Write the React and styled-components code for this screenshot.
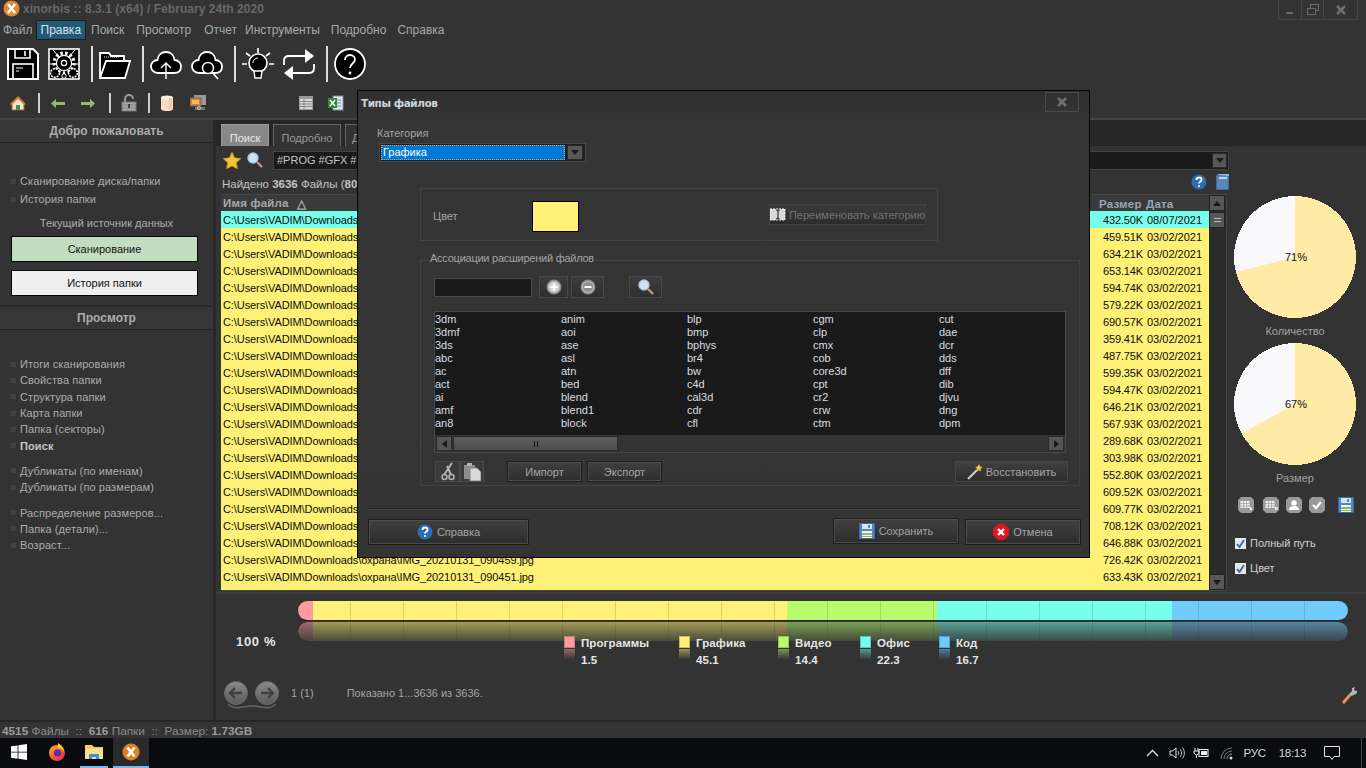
import React from "react";
import styled, { createGlobalStyle } from "styled-components";

const Global = createGlobalStyle`
  html, body { margin: 0; padding: 0; background: #333; overflow: hidden; }
  * { box-sizing: border-box; }
`;
const sans = `"Liberation Sans", Arial, sans-serif`;
const wide = `"DejaVu Sans", Verdana, sans-serif`;

const Page = styled.div`
  position: relative; width: 1366px; height: 768px; background: #333; display: flex; flex-direction: column;
  font: 11px ${sans}; color: #b4b4b4; overflow: hidden;
`;
const TitleBar = styled.div`height: 20px; display: flex; align-items: flex-start; padding-left: 3px; flex: none;`;
const TitleText = styled.div`font: bold 12px/18px ${sans}; letter-spacing: .05px; color: #686868; margin-left: 3px; flex: 1; white-space: nowrap;`;
const WinButtons = styled.div`display: flex; height: 20px; margin-right: 8px; border: 1px solid #474747; border-top: 0; color: #6a6a6a;`;
const WinButton = styled.div`width: ${p => p.$w}px; display: flex; align-items: center; justify-content: center; & + & { border-left: 1px solid #474747; }`;
const MenuBar = styled.div`height: 20px; display: flex; align-items: center; padding-left: 3px; flex: none;`;
const MenuItem = styled.div`
  font: 12px/18px ${sans}; height: 18px; padding: 0 ${p => p.$active ? 4 : 0}px; margin-right: ${p => p.$gap}px; white-space: nowrap;
  color: ${p => p.$active ? "#d8e4e8" : "#a3a9ab"}; background: ${p => p.$active ? "#215a74" : "transparent"};
  outline: ${p => p.$active ? "1px solid #1d1d1d" : "none"};
`;
const BigBar = styled.div`height: 48px; display: flex; align-items: center; padding-left: 7px; flex: none;`;
const BigSlot = styled.div`width: ${p => p.$w || 32}px; height: 34px; margin-right: ${p => p.$mr ?? 9}px; display: flex; align-items: center; justify-content: center; flex: none;`;
const BigSep = styled.div`width: 2px; height: 36px; background: #ddd; margin: 0 6px 0 ${p => p.$ml ?? 2}px; flex: none;`;
const SmallBar = styled.div`height: 30px; display: flex; align-items: center; padding-left: 9px; flex: none;`;
const SmallSlot = styled.div`width: 18px; height: 18px; margin-left: ${p => p.$ml || 0}px; display: flex; align-items: center; justify-content: center; flex: none;`;
const SmallSep = styled.div`width: 2px; height: 20px; background: #cfcfcf; margin-left: ${p => p.$ml || 0}px; flex: none;`;

const Main = styled.div`height: 602px; display: flex; flex: none; border-top: 2px solid #444;`;
const Sidebar = styled.div`width: 213px; flex: none; display: flex; flex-direction: column;`;
const SideHead = styled.div`
  height: ${p => p.$top ? 25 : 23}px; display: flex; align-items: center; justify-content: center; font: bold 12px/22px ${sans}; color: #acacac; word-spacing: 1px;
  border-bottom: 1px solid #242424; background: #363636; border-top: ${p => p.$top ? "2px solid #292929" : "0"}; flex: none; margin-top: ${p => p.$mt || 0}px;
`;
const SideList = styled.div`display: flex; flex-direction: column; margin-top: ${p => p.$mt || 0}px;`;
const SideItem = styled.div`
  display: flex; align-items: center; height: ${p => p.$h || 16.3}px; padding-left: 11px; white-space: nowrap; font-weight: ${p => p.$bold ? 700 : 400}; letter-spacing: .1px;
  color: ${p => p.$bold ? "#c4c4c4" : "#acacac"};
  &::before { content: ""; width: 5px; height: 5px; background: #424242; margin-right: 4px; flex: none; }
`;
const SideCaption = styled.div`text-align: center; margin-top: 8px; height: 14px; line-height: 14px; color: #acacac;`;
const SideButton = styled.div`
  margin: ${p => p.$mt}px 0 0 11px; width: 187px; height: 26px; display: flex; align-items: center; justify-content: center;
  border: 1px solid #050505; background: ${p => p.$bg}; color: #111; font-size: 11px;
`;
const Pane = styled.div`flex: 1; display: flex; flex-direction: column; border-left: 3px solid #282828; min-width: 0;`;
const TabBar = styled.div`height: 26px; background: #262626; display: flex; align-items: flex-end; padding-left: 5px; gap: 4px; flex: none;`;
const Tab = styled.div`
  height: 22px; width: ${p => p.$w}px; display: flex; align-items: center; justify-content: ${p => p.$left ? "flex-start" : "center"}; padding: 4px 0 0 ${p => p.$left ? 6 : 0}px;
  background: ${p => p.$active ? "#888" : "#333"}; color: ${p => p.$active ? "#e8e8e8" : "#999"}; border: 1px solid ${p => p.$active ? "#999" : "#666"}; border-bottom: 0;
`;
const Upper = styled.div`height: 446px; display: flex; flex: none;`;
const ListCol = styled.div`width: 1014px; flex: none; display: flex; flex-direction: column; padding: 0 1px 0 4px;`;
const SearchRow = styled.div`height: 20px; margin-top: 4px; display: flex; align-items: center; flex: none; padding-left: 3px;`;
const SearchGlass = styled.div`margin-left: 6px; display: flex;`;
const SearchField = styled.div`
  margin-left: 10px; flex: 1; height: 19px; background: #1a1a1a; border: 1px solid #444; display: flex; align-items: center; justify-content: space-between;
  font: 11px ${sans}; color: #c4c4c4; padding-left: 3px;
`;
const ComboArrow = styled.div`
  width: ${p => p.$w || 15}px; height: ${p => p.$h || 15}px; background: #585858; border: 1px solid #2a2a2a; margin-right: 1px; display: flex; align-items: center; justify-content: center;
  &::after { content: ""; border: 4px solid transparent; border-top: 5px solid #1c1c1c; border-bottom: 0; }
`;
const FoundRow = styled.div`height: 16px; margin-top: 6px; display: flex; align-items: center; flex: none; color: #c4c4c4; gap: 3px; font-size: 11.5px; padding-left: 2px;`;
const FoundIcons = styled.div`margin: -4px 0 0 auto; display: flex; align-items: center; gap: 9px;`;
const Table = styled.div`height: 397px; margin-top: 2px; display: flex; border: 1px solid #454545; border-left: 0; flex: none; width: 1006px; margin-left: 1px;`;
const TableMain = styled.div`flex: 1; display: flex; flex-direction: column; min-width: 0;`;
const HeadRow = styled.div`height: 16px; display: flex; flex: none; background: #3a3a3a; font-weight: 700; color: #a8a8a8; align-items: center; font-size: 11.5px; letter-spacing: .2px; padding-top: 1px;`;
const HeadName = styled.div`flex: 1; padding-left: 2px; display: flex; gap: 8px;`;
const HeadSize = styled.div`width: 47px; color: #97a6b6;`;
const HeadDate = styled.div`width: 63px; color: #97a6b6;`;
const Rows = styled.div`flex: 1; overflow: hidden; background: #fff176;`;
const Row = styled.div`height: 17px; display: flex; align-items: center; color: #0d0d0d; background: ${p => p.$cyan ? "#76ffec" : "#fff176"}; white-space: nowrap;`;
const CellName = styled.div`flex: 1; padding-left: 2px; letter-spacing: -.09px;`;
const CellSize = styled.div`width: 60px; text-align: right; margin-right: 4px; letter-spacing: -.15px;`;
const CellDate = styled.div`width: 62px;`;
const VScroll = styled.div`width: 17px; flex: none; background: #2b2b2b; display: flex; flex-direction: column; padding: 0 1px 0 0;`;
const ScrollBtn = styled.div`
  height: 16px; background: #575757; border: 1px solid #222; display: flex; align-items: center; justify-content: center; flex: none; margin-top: ${p => p.$auto ? "auto" : (p.$mt || 0) + "px"};
`;
const Arrow = styled.div`
  width: 0; height: 0; border: 4px solid transparent;
  ${p => p.$dir === "up" && "border-bottom: 5px solid #181818; border-top: 0;"}
  ${p => p.$dir === "down" && "border-top: 5px solid #181818; border-bottom: 0;"}
  ${p => p.$dir === "left" && "border-right: 5px solid #181818; border-left: 0;"}
  ${p => p.$dir === "right" && "border-left: 5px solid #181818; border-right: 0;"}
`;
const Grip = styled.div`width: 7px; height: 4px; border-top: 1px solid #bbb; border-bottom: 1px solid #bbb;`;
const SideCol = styled.div`flex: 1; display: flex; flex-direction: column; align-items: center; padding: 50px 6px 0 0;`;
const PieCaption = styled.div`margin-top: 6px; height: 14px; line-height: 14px; color: #a2a2a2; margin-bottom: 5px;`;
const ActionIcons = styled.div`display: flex; align-self: flex-start; margin: 7px 0 0 8px; gap: 7px;`;
const ActionSlot = styled.div`margin-left: ${p => p.$ml || 0}px; display: flex;`;
const Check = styled.div`display: flex; align-items: center; align-self: flex-start; margin: ${p => p.$mt}px 0 0 5px; height: 12px; color: #d0d0d0; gap: 4px;`;
const CheckBox = styled.div`width: 11px; height: 11px; background: #e8e8e8; display: flex; align-items: center; justify-content: center;`;

const Lower = styled.div`flex: 1; display: flex; flex-direction: column; padding-top: 7px; border-top: 2px solid #3d3d3d; width: 100%;`;
const BarBlock = styled.div`margin-left: 82px; width: 1050px; height: 39px; display: flex; flex-direction: column; flex: none;`;
const BarStrip = styled.div`
  height: 19px; display: flex; border-radius: 10px; overflow: hidden; flex: none;
  ${p => p.$mirror && "margin-top: 1px; mask-image: linear-gradient(rgba(0,0,0,.55), rgba(0,0,0,.12));"}
`;
const Seg = styled.div`
  width: ${p => p.$w}px; flex: none; background-color: ${p => p.$c};
  background-image: ${p => p.$ticks ? "linear-gradient(to right, rgba(0,0,0,.13) 1px, transparent 1px)" : "none"};
  background-size: 53px 100%; background-position: ${p => p.$off || 0}px 0;
`;
const BarLine = styled.div`height: 1px; background: #2a2a2a; flex: none;`;
const Stats = styled.div`display: flex; margin-top: -5px; height: 34px; flex: none; padding-left: 20px; position: relative;`;
const Percent = styled.div`font: bold 13px/16px ${sans}; color: #e4e4e4; width: 328px; margin-top: -1px; letter-spacing: .7px;`;
const LegendItem = styled.div`width: ${p => p.$w}px; display: flex; flex: none; gap: 6px;`;
const SwatchWrap = styled.div`width: 11px; display: flex; flex-direction: column; margin-top: 1px;`;
const Swatch = styled.div`height: 12px; background: ${p => p.$c}; border: 1px solid rgba(0,0,0,.22);`;
const SwatchMirror = styled.div`height: 10px; margin-top: 1px; background: ${p => p.$c}; mask-image: linear-gradient(rgba(0,0,0,.5), rgba(0,0,0,.05));`;
const LegendText = styled.div`font: bold 11.5px/17px ${sans}; color: #e6e6e6; white-space: nowrap; letter-spacing: .1px;`;
const NavRow = styled.div`display: flex; align-items: center; height: 30px; margin-top: 11px; padding: 0 9px 0 8px; flex: none; color: #a4a4a4;`;
const NavText = styled.div`margin: 0 0 4px ${p => p.$ml}px; white-space: nowrap;`;
const NavTool = styled.div`margin-left: auto; display: flex;`;

const StatusBar = styled.div`height: 18px; flex: none; border-top: 2px solid #262626; padding: 1px 0 0 2px; font: 11.8px/17px ${sans}; color: #8a8a8a; white-space: pre;`;
const StatusNum = styled.b`color: #9a9a9a;`;
const Taskbar = styled.div`height: 30px; flex: none; background: #090b0e; display: flex; align-items: stretch; color: #dcdcdc;`;
const TaskSlot = styled.div`
  width: ${p => p.$w}px; margin-left: ${p => p.$ml || 0}px; display: flex; align-items: center; justify-content: center; flex: none;
  background: ${p => p.$active ? "#2a2a2a" : "transparent"}; border-bottom: 2px solid ${p => p.$line ? "#76b9ed" : "transparent"};
`;
const Tray = styled.div`margin-left: auto; display: flex; align-items: center; font: 12px ${sans}; color: #d8d8d8;`;
const TraySlot = styled.div`margin-left: ${p => p.$ml || 0}px; display: flex; align-items: center;`;
const TrayText = styled(TraySlot)`font-size: 11.5px; letter-spacing: -.3px;`;
const TrayEdge = styled.div`width: 1px; height: 100%; background: #444; margin: 0 4px 0 21px;`;

const Dialog = styled.div`
  position: absolute; left: 357px; top: 90px; width: 733px; height: 468px; border: 1px solid #050505; padding: 1px;
  background: linear-gradient(#2f2f2f, #353535 30px, #343434); display: flex; flex-direction: column; color: #a4a4a4;
`;
const DlgTitle = styled.div`height: 21px; display: flex; justify-content: space-between; padding: 0 9px 0 2px; flex: none;`;
const DlgTitleText = styled.div`font: bold 10.5px/23px ${wide}; color: #cdd4da; letter-spacing: -.45px;`;
const DlgClose = styled.div`width: 34px; height: 20px; border: 1px solid #4a4a4a; display: flex; align-items: center; justify-content: center;`;
const DlgLabel = styled.div`margin: 13px 0 0 18px; height: 14px; line-height: 14px; color: #a4a4a4; flex: none;`;
const Select = styled.div`margin: 3px 0 0 20px; width: 207px; height: 19px; background: #1e1e1e; border: 1px solid #484848; padding: 1px; display: flex; align-items: center; gap: 2px; flex: none;`;
const SelectValue = styled.div`flex: 1; height: 15px; background: #0078d7; outline: 1px dotted #d8a060; outline-offset: -1px; color: #fff; line-height: 15px; padding-left: 2px;`;
const Group = styled.div`
  position: relative; margin: ${p => p.$mt}px 0 0 61px; width: ${p => p.$w}px; height: ${p => p.$h}px; border: 1px solid #434343; flex: none;
`;
const ColorRow = styled.div`display: flex; padding: 12px 0 0 12px;`;
const ColorLabel = styled.div`width: 99px; height: 31px; line-height: 31px;`;
const ColorSwatch = styled.div`width: 47px; height: 31px; background: #fff176; border: 1px solid #000;`;
const Rename = styled.div`
  margin: 3px 0 0 190px; width: 157px; height: 21px; display: flex; align-items: center; color: #737373; background: linear-gradient(#3b3b3b, #2c2c2c); border: 1px solid #414141; white-space: nowrap; gap: 3px;
`;
const Legend = styled.div`position: absolute; top: -10px; left: 9px; background: #343434; color: #a4a4a4; line-height: 14px; padding-right: 1px; letter-spacing: -.25px;`;
const GroupInner = styled.div`display: flex; flex-direction: column; padding: 15px 0 0 13px;`;
const ToolRow = styled.div`display: flex; align-items: center; height: 22px; flex: none;`;
const TextBox = styled.div`width: 98px; height: 19px; background: #1a1a1a; border: 1px solid #4a4a4a;`;
const IconBtn = styled.div`
  width: ${p => p.$w}px; height: ${p => p.$h || 22}px; margin-left: ${p => p.$ml || 0}px; display: flex; align-items: center; justify-content: center;
  background: ${p => p.$plain ? "#3a3a3a" : "linear-gradient(#3c3c3c, #2f2f2f)"}; border: 1px solid #484848;
`;
const ExtList = styled.div`margin-top: 13px; width: 632px; height: 142px; display: flex; flex-direction: column; border: 1px solid #484848; background: #1a1a1a;`;
const ExtGrid = styled.div`
  flex: 1; display: grid; grid-auto-flow: column; grid-template-rows: repeat(9, 13px); grid-template-columns: repeat(5, 126px); padding-top: 1px; overflow: hidden; color: #d8dde0; line-height: 13px;
`;
const HScroll = styled.div`height: 17px; background: #343434; display: flex; flex: none; align-items: stretch; padding: 1px;`;
const HBtn = styled.div`width: 16px; background: #555; border: 1px solid #2a2a2a; display: flex; align-items: center; justify-content: center; margin-left: ${p => p.$auto ? "auto" : "0"};`;
const HThumb = styled.div`width: 165px; margin-left: 1px; background: linear-gradient(#5e5e5e, #4c4c4c); border: 1px solid #2a2a2a; display: flex; align-items: center; justify-content: center; gap: 2px;`;
const Tick = styled.div`width: 1px; height: 6px; background: #111;`;
const ActionRow = styled.div`display: flex; margin-top: 8px; height: 21px; width: 634px; flex: none;`;
const FlatButton = styled.div`
  width: ${p => p.$w}px; height: ${p => p.$h || 21}px; margin-left: ${p => p.$auto ? "auto" : (p.$ml || 0) + "px"}; margin-bottom: ${p => p.$mb || 0}px; display: flex; align-items: center; justify-content: center; gap: ${p => p.$gap || 0}px;
  background: linear-gradient(#404040, #2d2d2d); border: 1px solid ${p => p.$soft ? "#464646" : "#1d1d1d"}; outline: ${p => p.$soft ? "none" : "1px solid #4c4c4c"}; outline-offset: -2px; color: #a4a4a4; flex: none;
`;
const Divider = styled.div`margin: 22px 0 0 10px; width: 711px; background: #222; border-bottom: 1px solid #444; height: 2px; flex: none;`;
const DlgFooter = styled.div`display: flex; margin: 8px 0 0 9px; width: 713px; flex: none; align-items: center;`;

const Ic = ({ w = 32, h = 32, vb, children }) => <svg width={w} height={h} viewBox={vb || `0 0 ${w} ${h}`} fill="none">{children}</svg>;

const Logo = () => (
  <Ic w={17} h={17}><circle cx="8.5" cy="8.5" r="8" fill="#df8a30" /><path d="M5 4l7 9M12 4l-7 9" stroke="#fff" strokeWidth="2.6" /></Ic>
);
const SaveBig = () => (
  <Ic><path d="M1 1h25l5 5v25H1z" fill="#000" stroke="#fff" strokeWidth="2" /><path d="M8 1v9h15V1M18 3v5" stroke="#fff" strokeWidth="1.6" /><rect x="6" y="16" width="20" height="15" stroke="#fff" strokeWidth="1.6" /><path d="M9 20h7M9 23h3" stroke="#fff" /></Ic>
);
const GearBig = () => (
  <Ic>
    <rect x="1" y="1" width="30" height="30" fill="#000" stroke="#fff" strokeWidth="1.6" />
    <circle cx="16" cy="15" r="10" stroke="#fff" strokeWidth="3.2" strokeDasharray="2.4 2.4" />
    <circle cx="16" cy="15" r="7.6" stroke="#fff" strokeWidth="1.2" />
    <circle cx="16" cy="15" r="2.6" stroke="#fff" strokeWidth="1.2" />
    <path d="M5 2l7 8M27 2l-7 8M1 16h7M31 16h-7" stroke="#fff" />
    <circle cx="7" cy="25" r="4.4" fill="#000" stroke="#fff" strokeWidth="1.6" strokeDasharray="2 1" />
    <circle cx="25" cy="25" r="4.4" fill="#000" stroke="#fff" strokeWidth="1.6" strokeDasharray="2 1" />
    <circle cx="16" cy="28" r="2.2" fill="#000" stroke="#fff" />
  </Ic>
);
const FolderBig = () => (
  <Ic>
    <path d="M1 29V5h9l2 3h13v5" stroke="#fff" strokeWidth="1.8" fill="#000" />
    <path d="M5 9h16" stroke="#fff" strokeDasharray="1 1" />
    <path d="M1 30l6-17h24l-5 17z" fill="#000" stroke="#fff" strokeWidth="1.8" />
  </Ic>
);
const cloud = "M8 25C3 25 1 21 1 18.5 1 15 4 12 7.500 12 8 7 11.500 4 16 4s8 3 8.500 8c3.500 0 6.500 3 6.500 6.500S29 25 24 25";
const CloudUp = () => (
  <Ic><path d={cloud + "z"} fill="#000" stroke="#fff" strokeWidth="1.8" /><path d="M16 31V15M11 20l5-5 5 5" stroke="#fff" strokeWidth="1.4" /></Ic>
);
const CloudFind = () => (
  <Ic><path d={cloud + "z"} fill="#000" stroke="#fff" strokeWidth="1.8" /><circle cx="17" cy="20" r="5.500" fill="#000" stroke="#fff" strokeWidth="1.4" /><path d="M21 24l6 7" stroke="#fff" strokeWidth="1.6" /></Ic>
);
const BulbBig = () => (
  <Ic w={32} h={34}>
    <path d="M16 1v5M4 6l4 3M28 6l-4 3M0 17h5M27 17h5" stroke="#fff" strokeWidth="1.6" />
    <circle cx="16" cy="16" r="9" fill="#000" stroke="#fff" strokeWidth="1.6" />
    <path d="M12 24h8l-1 7h-6z" fill="#000" stroke="#fff" strokeWidth="1.4" />
    <path d="M11 16a5 5 0 0 1 5-5" stroke="#fff" />
  </Ic>
);
const SwapBig = () => (
  <Ic>
    <path d="M1 17v-4c0-3 2-5 5-5h17" stroke="#fff" strokeWidth="1.8" />
    <path d="M22 1l9 7-9 7z" fill="#fff" />
    <path d="M31 16v4c0 3-2 5-5 5H9" stroke="#fff" strokeWidth="1.8" />
    <path d="M10 18l-9 7 9 7z" fill="#fff" />
  </Ic>
);
const HelpBig = () => (
  <Ic>
    <circle cx="16" cy="16" r="15" fill="#000" stroke="#fff" strokeWidth="1.8" />
    <path d="M11 12c0-3 2.200-5 5-5s5 2 5 4.500c0 4-5 4-5 8.500" stroke="#fff" strokeWidth="1.8" />
    <circle cx="16" cy="25" r="1.400" fill="#fff" />
  </Ic>
);
const Home = () => (
  <Ic w={18} h={18}><path d="M3 9v7h12V9L9 4z" fill="#f2e6cf" stroke="#8a6a3e" /><path d="M1 10l8-8 8 8-1.500 1L9 5l-6.500 6z" fill="#d9772a" /><rect x="7" y="11" width="4" height="5" fill="#4d8a4a" /></Ic>
);
const GreenArrow = ({ left }) => (
  <Ic w={14} h={9}><path d={left ? "M0 4.500L5 0v3h9v3H5v3z" : "M14 4.500L9 0v3H0v3h9v3z"} fill="#8cc06e" /></Ic>
);
const Lock = () => (
  <Ic w={16} h={18}><path d="M4 8V5a4 4 0 0 1 8 0" stroke="#999" strokeWidth="2" /><rect x="1" y="8" width="14" height="9" fill="#aaa" stroke="#777" /><path d="M1 11h14M1 14h14" stroke="#808080" /><rect x="7" y="10" width="2" height="4" fill="#444" /></Ic>
);
const Db = () => (
  <Ic w={14} h={16}><rect x="1" y="2" width="12" height="12" fill="#ffdcbe" /><ellipse cx="7" cy="2.500" rx="6" ry="2" fill="#fff4e8" /><ellipse cx="7" cy="14" rx="6" ry="2" fill="#ffdcbe" /><rect x="9" y="3" width="3" height="11" fill="#f4c7a0" /></Ic>
);
const Net = () => (
  <Ic w={16} h={16}><rect x="4" y="0" width="12" height="10" fill="#9a9a9a" /><rect x="0" y="3" width="11" height="8" fill="#d88428" stroke="#666" /><rect x="2" y="5" width="7" height="4" fill="#eebb66" /><path d="M5 12h10v3H5z" fill="#777" /><circle cx="9" cy="13" r="1.500" stroke="#ccc" /></Ic>
);
const TableIc = () => (
  <Ic w={14} h={14}><rect x=".5" y=".5" width="13" height="13" fill="#d8d8d8" stroke="#999" /><rect x="1" y="1" width="12" height="2" fill="#999" /><path d="M1 5.500h12M1 8h12M1 10.500h12M5 3v10" stroke="#888" /></Ic>
);
const Excel = () => (
  <Ic w={16} h={16}><rect x="5" y="1" width="10" height="14" fill="#dfe8f0" stroke="#6c8fb0" /><path d="M7 5h6M7 8h6M7 11h6" stroke="#6c8fb0" /><rect x="0" y="3" width="9" height="10" fill="#2f8a3d" /><path d="M2 5l5 6M7 5l-5 6" stroke="#fff" strokeWidth="1.400" /></Ic>
);
const Star = () => (
  <Ic w={18} h={17}><path d="M9 0l2.700 5.800 6.300.7-4.700 4.300 1.300 6.200L9 14l-5.600 3 1.300-6.200L0 6.500l6.300-.7z" fill="#f4c430" stroke="#c08a20" strokeWidth=".6" /></Ic>
);
const Glass = () => (
  <Ic w={16} h={16}><circle cx="6" cy="6" r="5" fill="#cfe3f7" stroke="#a8c4e0" strokeWidth="1.400" /><path d="M10 10l5 5" stroke="#c79a6a" strokeWidth="2.400" /></Ic>
);
const HelpBlue = ({ s = 16 }) => (
  <svg width={s} height={s} viewBox="0 0 16 16" fill="none">
    <circle cx="8" cy="8" r="7.500" fill="#2d6cb0" />
    <path d="M5.500 6c0-1.500 1.200-2.500 2.600-2.500S10.600 4.400 10.600 5.800c0 2-2.600 2-2.600 3.800" stroke="#fff" strokeWidth="1.800" />
    <circle cx="8" cy="12" r="1.100" fill="#fff" />
  </svg>
);
const Book = () => (
  <Ic w={13} h={16}><rect x="0" y="1" width="13" height="15" fill="#5b87b8" stroke="#2d4f7c" /><rect x="3" y="3" width="8" height="2" fill="#bcd4ee" /><path d="M1 1l2-1h10v2" fill="#9ab8d8" /></Ic>
);
const FloppyBlue = ({ s = 16 }) => (
  <svg width={s} height={s} viewBox="0 0 16 16" fill="none">
    <rect x=".5" y=".5" width="15" height="15" fill="#4f87c8" stroke="#3a6aa4" />
    <rect x="3" y="1" width="10" height="5" fill="#d8e4f2" /><rect x="9" y="2" width="2" height="3" fill="#4f87c8" />
    <rect x="3" y="8" width="10" height="7" fill="#f4f4f4" /><rect x="3" y="10" width="10" height="2" fill="#88c057" /><rect x="3" y="13" width="10" height="1" fill="#88c057" />
  </svg>
);
const GrayTile = ({ children }) => (
  <Ic w={16} h={16}><path d="M3 0h10l3 3v10l-3 3H3l-3-3V3z" fill="#9a9a9a" />{children}</Ic>
);
const GridTile = ({ d }) => (
  <GrayTile><rect x="2.500" y="4" width="9" height="7" fill="#eee" /><path d="M2.500 6.500h9M2.500 9h9M5.500 4v7M8.500 4v7" stroke="#999" strokeWidth=".7" /><path d={d} stroke="#fff" /></GrayTile>
);
const PersonTile = () => <GrayTile><circle cx="8" cy="6" r="2.700" fill="#fff" /><path d="M3 13c0-3 2-4 5-4s5 1 5 4z" fill="#fff" /></GrayTile>;
const CheckTile = () => <GrayTile><path d="M4 8l3 3 5-6" stroke="#fff" strokeWidth="2.200" /></GrayTile>;
const CheckMark = () => <Ic w={9} h={9}><path d="M1 5l2.500 3L8 1" stroke="#3b5fa8" strokeWidth="1.800" /></Ic>;
const CloseX = ({ s = 12, c = "#6e6e6e" }) => <svg width={s} height={s} viewBox="0 0 12 12"><path d="M2 2l8 8M10 2l-8 8" stroke={c} strokeWidth="2.600" /></svg>;
const Restore = () => <Ic w={12} h={12}><rect x="3.500" y=".5" width="8" height="6" stroke="#6a6a6a" /><rect x=".5" y="4.500" width="8" height="6" fill="#333" stroke="#6a6a6a" /></Ic>;
const Minimize = () => <Ic w={10} h={10}><path d="M1 8h7" stroke="#6a6a6a" strokeWidth="2" /></Ic>;
const RoundSign = ({ plus }) => (
  <Ic w={16} h={16}><circle cx="8" cy="8" r="6.800" fill="#bdbdbd" stroke="#8a8a8a" strokeWidth="1.400" /><circle cx="8" cy="8" r="5" fill={plus ? "#d4d4d4" : "#8e8e8e"} /><path d={plus ? "M4.500 8h7M8 4.500v7" : "M4.500 8h7"} stroke="#fff" strokeWidth="2" /></Ic>
);
const Scissors = () => (
  <Ic w={14} h={19}><path d="M3 13L11 1M10 13L6 4" stroke="#b0b0b0" strokeWidth="2" /><circle cx="3.500" cy="15" r="2.500" stroke="#b0b0b0" strokeWidth="1.600" /><circle cx="10.500" cy="15" r="2.500" stroke="#b0b0b0" strokeWidth="1.600" /></Ic>
);
const Paste = () => (
  <Ic w={17} h={18}><rect x="0" y="2" width="11" height="14" fill="#8e8e8e" /><rect x="3" y="0" width="5" height="3" fill="#b4b4b4" /><path d="M6 5h7l4 4v9H6z" fill="#d8d8d8" stroke="#8a8a8a" /></Ic>
);
const RenameIc = () => (
  <Ic w={16} h={13}><rect x="0" y="1" width="15" height="11" fill="#d8d8d8" stroke="#fff" strokeDasharray="2 1" /><path d="M6 2h4M6 11h4M8 2v9" stroke="#111" /></Ic>
);
const Wand = () => (
  <Ic w={16} h={16}><path d="M1 15L10 6" stroke="#cfcfcf" strokeWidth="2" /><path d="M12 0l1 2.500 2.500.5-2 2 .5 2.500L12 6.300 9.700 7.500l.5-2.500-2-2 2.500-.5z" fill="#f0c040" /></Ic>
);
const Cancel = () => (
  <Ic w={16} h={16}><path d="M5 0h6l5 5v6l-5 5H5l-5-5V5z" fill="#e3161e" /><path d="M5 5l6 6M11 5l-6 6" stroke="#fff" strokeWidth="2.400" /></Ic>
);
const NavArrows = () => (
  <Ic w={56} h={30}>
    <defs><linearGradient id="nb" x1="0" y1="0" x2="0" y2="1"><stop offset="0" stopColor="#8a8a8a" /><stop offset="1" stopColor="#5a5a5a" /></linearGradient></defs>
    <path d="M4 24c6 7 14 2 24 2s16 5 24-2" stroke="#666" strokeWidth="1.500" />
    <circle cx="12" cy="13" r="11.500" fill="url(#nb)" stroke="#6a6a6a" />
    <circle cx="43" cy="13" r="11.500" fill="url(#nb)" stroke="#6a6a6a" />
    <path d="M18 13H7M11 8l-5 5 5 5" stroke="#3f3f3f" strokeWidth="2.400" />
    <path d="M37 13h11M44 8l5 5-5 5" stroke="#3f3f3f" strokeWidth="2.400" />
  </Ic>
);
const Wrench = () => (
  <Ic w={16} h={17}><path d="M1 15l7-8 2 2-7 8z" fill="#f2945a" /><path d="M8 7l3-3 0-3 3-1-1 3 2 1 2-1-1 3-3 2-3 1z" fill="#b4b4b4" /></Ic>
);
const WinLogo = () => (
  <Ic w={16} h={16}><path d="M0 2.300l6.600-.9v6.300H0zM7.400 1.300L16 0v7.700H7.400zM0 8.400h6.600v6.300L0 13.800zM7.400 8.400H16V16l-8.600-1.200z" fill="#fff" /></Ic>
);
const Firefox = () => (
  <Ic w={18} h={18}>
    <defs><linearGradient id="ff" x1="0" y1="0" x2="1" y2="1"><stop offset="0" stopColor="#ffbb33" /><stop offset=".5" stopColor="#ff5a2c" /><stop offset="1" stopColor="#d81e6a" /></linearGradient></defs>
    <circle cx="9" cy="10" r="8" fill="url(#ff)" /><circle cx="9.500" cy="10" r="3.600" fill="#5a2ea6" />
    <path d="M10 0c3 2 6 4 6 9-2-3-4-4-6-4z" fill="#ffc72c" />
  </Ic>
);
const Explorer = () => (
  <Ic w={18} h={16}><path d="M0 1h7l2 2h9v12H0z" fill="#f6cf5f" /><rect x="0" y="5" width="18" height="10" fill="#fbe08a" /><path d="M4 15v-5h10v5h-3v-2H7v2z" fill="#3a96dd" /></Ic>
);
const XinTask = () => (
  <Ic w={18} h={18}><circle cx="9" cy="9" r="8.500" fill="#d9822b" /><path d="M5.500 4.500l7 9M12.500 4.500l-7 9" stroke="#fff" strokeWidth="2.800" /></Ic>
);
const Chevron = () => <Ic w={13} h={8}><path d="M1 7l5.500-5.500L12 7" stroke="#e4e4e4" strokeWidth="1.300" /></Ic>;
const Speaker = () => (
  <Ic w={16} h={14}><path d="M1 5h2.500L7 2v10L3.500 9H1z" stroke="#e4e4e4" /><path d="M9 5c1 1 1 3 0 4M11 3c2 2 2 6 0 8M13.500 1.500c2.500 3 2.500 8 0 11" stroke="#bdbdbd" /></Ic>
);
const Battery = () => (
  <Ic w={16} h={12}><path d="M2 1v3M5 1v3M1 4h5v2l-2 2H3L1 6zM3.500 8v3" stroke="#eee" /><rect x="6" y="2.500" width="9" height="7" stroke="#eee" /><rect x="8" y="4" width="6" height="4" fill="#eee" /></Ic>
);
const Wifi = () => (
  <Ic w={13} h={13}><path d="M1 12A11 11 0 0 1 12 1M4 12A8 8 0 0 1 12 4" stroke="#777" /><path d="M7 12a5 5 0 0 1 5-5" stroke="#999" /><circle cx="11" cy="11" r="1.500" fill="#ddd" /></Ic>
);
const Comment = () => (
  <Ic w={16} h={16}><path d="M.5 1.500h15v10H10l-2 3-2-3H.5z" stroke="#e4e4e4" /></Ic>
);

const Pie = ({ value }) => {
  const a = (value / 100) * 2 * Math.PI;
  const x = 61 + 61 * Math.sin(a), y = 61 - 61 * Math.cos(a);
  return (
    <svg width="122" height="122" viewBox="0 0 122 122" shapeRendering="crispEdges" style={{ flex: "none" }}>
      <circle cx="61" cy="61" r="61" fill="#f9f9fb" />
      <path d={`M61 61V0A61 61 0 ${value > 50 ? 1 : 0} 1 ${x} ${y}Z`} fill="#ffeba6" />
      <text x="62" y="65" textAnchor="middle" fontFamily={sans} fontSize="11" fill="#111" shapeRendering="auto">{value}%</text>
    </svg>
  );
};

const sizes = ["432.50K","459.51K","634.21K","653.14K","594.74K","579.22K","690.57K","359.41K","487.75K","599.35K","594.47K","646.21K","567.93K","289.68K","303.98K","552.80K","609.52K","609.77K","708.12K","646.88K","726.42K","633.43K"];
const names = (i) => {
  const tail = ["090459", "090451"];
  if (i >= 20) return `C:\\Users\\VADIM\\Downloads\\охрана\\IMG_20210131_${tail[i - 20]}.jpg`;
  return `C:\\Users\\VADIM\\Downloads`;
};
const exts = "3dm 3dmf 3ds abc ac act ai amf an8 anim aoi ase asl atn bed blend blend1 block blp bmp bphys br4 bw c4d cal3d cdr cfl cgm clp cmx cob core3d cpt cr2 crw ctm cut dae dcr dds dff dib djvu dng dpm".split(" ");
const menu = [["Файл", 4], ["Правка", 6, true], ["Поиск", 12], ["Просмотр", 13], ["Отчет", 8], ["Инструменты", 11], ["Подробно", 11], ["Справка", 0]];
const segs = [
  { c: "#ff9a9e", w: 15 }, { c: "#fff176", w: 474, t: 1, o: 37 }, { c: "#b8fb6f", w: 150, t: 1, o: 40 },
  { c: "#76ffec", w: 235, t: 1, o: 49 }, { c: "#70ccff", w: 176, t: 1, o: 26 },
];
const legend = [["Программы", "1.5", "#ff9a9e", 115], ["Графика", "45.1", "#fff176", 99], ["Видео", "14.4", "#b8fb6f", 82], ["Офис", "22.3", "#76ffec", 79], ["Код", "16.7", "#70ccff", 70]];

const Strip = ({ mirror }) => (
  <BarStrip $mirror={mirror}>{segs.map((s, i) => <Seg key={i} $c={s.c} $w={s.w} $ticks={s.t} $off={s.o} />)}</BarStrip>
);

export default function App() {
  return (
    <Page>
      <Global />
      <TitleBar>
        <Logo />
        <TitleText>xinorbis :: 8.3.1 (x64) / February 24th 2020</TitleText>
        <WinButtons>
          <WinButton $w={22}><Minimize /></WinButton>
          <WinButton $w={22}><Restore /></WinButton>
          <WinButton $w={34}><CloseX /></WinButton>
        </WinButtons>
      </TitleBar>
      <MenuBar>
        {menu.map(([t, g, a]) => <MenuItem key={t} $gap={g} $active={a}>{t}</MenuItem>)}
      </MenuBar>
      <BigBar>
        <BigSlot><SaveBig /></BigSlot>
        <BigSlot><GearBig /></BigSlot>
        <BigSep />
        <BigSlot><FolderBig /></BigSlot>
        <BigSep />
        <BigSlot><CloudUp /></BigSlot>
        <BigSlot><CloudFind /></BigSlot>
        <BigSep />
        <BigSlot><BulbBig /></BigSlot>
        <BigSlot><SwapBig /></BigSlot>
        <BigSep />
        <BigSlot $mr={0}><HelpBig /></BigSlot>
      </BigBar>
      <SmallBar>
        <SmallSlot><Home /></SmallSlot>
        <SmallSep $ml={11} />
        <SmallSlot $ml={9}><GreenArrow left /></SmallSlot>
        <SmallSlot $ml={12}><GreenArrow /></SmallSlot>
        <SmallSep $ml={12} />
        <SmallSlot $ml={9}><Lock /></SmallSlot>
        <SmallSep $ml={10} />
        <SmallSlot $ml={8}><Db /></SmallSlot>
        <SmallSlot $ml={13}><Net /></SmallSlot>
        <SmallSlot $ml={90}><TableIc /></SmallSlot>
        <SmallSlot $ml={12}><Excel /></SmallSlot>
      </SmallBar>
      <Main>
        <Sidebar>
          <SideHead>Добро пожаловать</SideHead>
          <SideList $mt={29}>
            <SideItem $h={18}>Сканирование диска/папки</SideItem>
            <SideItem $h={18}>История папки</SideItem>
          </SideList>
          <SideCaption>Текущий источник данных</SideCaption>
          <SideButton $mt={6} $bg="#c1dcc0">Сканирование</SideButton>
          <SideButton $mt={8} $bg="#efefef">История папки</SideButton>
          <SideHead $top $mt={9}>Просмотр</SideHead>
          <SideList $mt={26}>
            {["Итоги сканирования", "Свойства папки", "Структура папки", "Карта папки", "Папка (секторы)"].map(t => <SideItem key={t}>{t}</SideItem>)}
            <SideItem $bold>Поиск</SideItem>
          </SideList>
          <SideList $mt={9}>
            <SideItem>Дубликаты (по именам)</SideItem>
            <SideItem>Дубликаты (по размерам)</SideItem>
          </SideList>
          <SideList $mt={9}>
            <SideItem>Распределение размеров...</SideItem>
            <SideItem>Папка (детали)...</SideItem>
            <SideItem>Возраст...</SideItem>
          </SideList>
        </Sidebar>
        <Pane>
          <TabBar>
            <Tab $active $w={48}>Поиск</Tab>
            <Tab $w={68}>Подробно</Tab>
            <Tab $w={60} $left>Д</Tab>
          </TabBar>
          <Upper>
            <ListCol>
              <SearchRow>
                <Star />
                <SearchGlass><Glass /></SearchGlass>
                <SearchField>#PROG #GFX #I<ComboArrow /></SearchField>
              </SearchRow>
              <FoundRow>
                <span>Найдено <b>3636</b> Файлы (<b>80</b></span>
                <FoundIcons><HelpBlue /><Book /></FoundIcons>
              </FoundRow>
              <Table>
                <TableMain>
                  <HeadRow>
                    <HeadName>Имя файла <span>△</span></HeadName>
                    <HeadSize>Размер</HeadSize>
                    <HeadDate>Дата</HeadDate>
                  </HeadRow>
                  <Rows>
                    {sizes.map((s, i) => (
                      <Row key={i} $cyan={i === 0}>
                        <CellName>{names(i)}</CellName>
                        <CellSize>{s}</CellSize>
                        <CellDate>{i === 0 ? "08/07/2021" : "03/02/2021"}</CellDate>
                      </Row>
                    ))}
                    <Row />
                  </Rows>
                </TableMain>
                <VScroll>
                  <ScrollBtn><Arrow $dir="up" /></ScrollBtn>
                  <ScrollBtn $mt={1}><Grip /></ScrollBtn>
                  <ScrollBtn $auto><Arrow $dir="down" /></ScrollBtn>
                </VScroll>
              </Table>
            </ListCol>
            <SideCol>
              <Pie value={71} />
              <PieCaption>Количество</PieCaption>
              <Pie value={67} />
              <PieCaption>Размер</PieCaption>
              <ActionIcons>
                <GridTile d="M12.500 13v-3l1 3" />
                <ActionSlot $ml={2}><GridTile d="M12.500 13v-3M14 13v-3" /></ActionSlot>
                <PersonTile />
                <CheckTile />
                <ActionSlot $ml={6}><FloppyBlue /></ActionSlot>
              </ActionIcons>
              <Check $mt={24}><CheckBox><CheckMark /></CheckBox>Полный путь</Check>
              <Check $mt={13}><CheckBox><CheckMark /></CheckBox>Цвет</Check>
            </SideCol>
          </Upper>
          <Lower>
            <BarBlock>
              <Strip />
              <BarLine />
              <Strip mirror />
            </BarBlock>
            <Stats>
              <Percent>100 %</Percent>
              {legend.map(([n, v, c, w]) => (
                <LegendItem key={n} $w={w}>
                  <SwatchWrap><Swatch $c={c} /><SwatchMirror $c={c} /></SwatchWrap>
                  <LegendText>{n}<br />{v}</LegendText>
                </LegendItem>
              ))}
            </Stats>
            <NavRow>
              <NavArrows />
              <NavText $ml={11}>1 (1)</NavText>
              <NavText $ml={33}>Показано 1...3636 из 3636.</NavText>
              <NavTool><Wrench /></NavTool>
            </NavRow>
          </Lower>
        </Pane>
      </Main>
      <StatusBar><StatusNum>4515</StatusNum> Файлы  ::  <StatusNum>616</StatusNum> Папки  ::  Размер: <StatusNum>1.73GB</StatusNum></StatusBar>
      <Taskbar>
        <TaskSlot $w={38}><WinLogo /></TaskSlot>
        <TaskSlot $w={38}><Firefox /></TaskSlot>
        <TaskSlot $w={28} $ml={4} $line><Explorer /></TaskSlot>
        <TaskSlot $w={36} $ml={5} $active $line><XinTask /></TaskSlot>
        <Tray>
          <TraySlot><Chevron /></TraySlot>
          <TraySlot $ml={10}><Speaker /></TraySlot>
          <TraySlot $ml={8}><Battery /></TraySlot>
          <TraySlot $ml={11}><Wifi /></TraySlot>
          <TrayText $ml={11}>РУС</TrayText>
          <TrayText $ml={13}>18:13</TrayText>
          <TraySlot $ml={18}><Comment /></TraySlot>
          <TrayEdge />
        </Tray>
      </Taskbar>
      <Dialog>
        <DlgTitle>
          <DlgTitleText>Типы файлов</DlgTitleText>
          <DlgClose><CloseX /></DlgClose>
        </DlgTitle>
        <DlgLabel>Категория</DlgLabel>
        <Select><SelectValue>Графика</SelectValue><ComboArrow $w={16} /></Select>
        <Group $mt={26} $w={518} $h={53}>
          <ColorRow>
            <ColorLabel>Цвет</ColorLabel>
            <ColorSwatch />
            <Rename><RenameIc />Переименовать категорию</Rename>
          </ColorRow>
        </Group>
        <Group $mt={19} $w={660} $h={226}>
          <Legend>Ассоциации расширений файлов</Legend>
          <GroupInner>
            <ToolRow>
              <TextBox />
              <IconBtn $w={29} $ml={7}><RoundSign plus /></IconBtn>
              <IconBtn $w={33} $ml={3}><RoundSign /></IconBtn>
              <IconBtn $w={33} $ml={25}><Glass /></IconBtn>
            </ToolRow>
            <ExtList>
              <ExtGrid>{exts.map(e => <div key={e}>{e}</div>)}</ExtGrid>
              <HScroll>
                <HBtn><Arrow $dir="left" /></HBtn>
                <HThumb><Tick /><Tick /></HThumb>
                <HBtn $auto><Arrow $dir="right" /></HBtn>
              </HScroll>
            </ExtList>
            <ActionRow>
              <IconBtn $w={25} $h={21} $ml={1} $plain><Scissors /></IconBtn>
              <IconBtn $w={24} $h={21} $plain><Paste /></IconBtn>
              <FlatButton $w={75} $ml={23}>Импорт</FlatButton>
              <FlatButton $w={75} $ml={5}>Экспорт</FlatButton>
              <FlatButton $w={113} $auto $soft $gap={3}><Wand />Восстановить</FlatButton>
            </ActionRow>
          </GroupInner>
        </Group>
        <Divider />
        <DlgFooter>
          <FlatButton $w={161} $h={26} $gap={4}><HelpBlue />Справка</FlatButton>
          <FlatButton $w={126} $h={26} $auto $mb={2} $gap={4}><FloppyBlue />Сохранить</FlatButton>
          <FlatButton $w={116} $h={26} $ml={6} $gap={4}><Cancel />Отмена</FlatButton>
        </DlgFooter>
      </Dialog>
    </Page>
  );
}
